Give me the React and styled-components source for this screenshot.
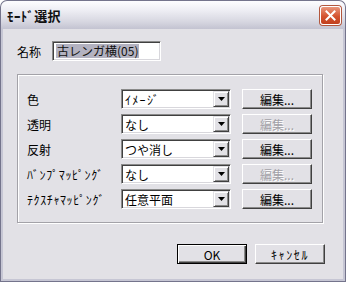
import styled, { createGlobalStyle } from "styled-components";

const GlobalStyle = createGlobalStyle`
  html, body {
    margin: 0;
    padding: 0;
    background: #ffffff;
  }
  body {
    font-family: "Noto Sans CJK JP", "Noto Sans", sans-serif;
    font-size: 12px;
    color: #000;
  }
`;

const Window = styled.div`
  width: 346px;
  height: 282px;
  display: flex;
  flex-direction: column;
`;

const TitleBar = styled.div`
  height: 29px;
  flex: none;
  box-sizing: border-box;
  display: flex;
  align-items: center;
  justify-content: space-between;
  padding: 0 4px 0 6px;
  border: 1px solid #74748c;
  border-bottom: none;
  border-radius: 7px 7px 0 0;
  background: linear-gradient(#fdfdff 0%, #ededf3 35%, #d6d6e0 75%, #c3c3d1 100%);
`;

const Title = styled.span`
  font-weight: bold;
  font-size: 13px;
  color: #111;
  letter-spacing: 0.4px;
`;

const CloseButton = styled.div`
  width: 21px;
  height: 19px;
  box-sizing: border-box;
  border: 1px solid #ffffff;
  border-radius: 3px;
  background: linear-gradient(#e9967c, #d4532f 55%, #c1401f);
  box-shadow: 0 0 0 1px #b2573e;
  display: flex;
  align-items: center;
  justify-content: center;
`;

const Client = styled.div`
  flex: 1;
  box-sizing: border-box;
  background: #e2e1e6;
  border: 1px solid #74748c;
  border-top: none;
  box-shadow: inset 2px 0 0 #c6c6d4, inset -2px 0 0 #c6c6d4, inset 0 -2px 0 #c6c6d4;
  padding: 12px 20px 0 16px;
  display: flex;
  flex-direction: column;
`;

const NameRow = styled.div`
  display: flex;
  align-items: center;
  gap: 11px;
`;

const Label = styled.span`
  font-size: 12px;
  white-space: nowrap;
  letter-spacing: ${(p) => p.spacing || 0}px;
`;

const Sunken = styled.div`
  box-sizing: border-box;
  width: ${(p) => p.w}px;
  height: 20px;
  background: #ffffff;
  border: 1px solid;
  border-color: #8a8a8a #ffffff #ffffff #8a8a8a;
  box-shadow: inset 1px 1px 0 #404040, inset -1px -1px 0 #d8d7dc;
  display: flex;
  align-items: center;
  padding: 0 2px 0 3px;
`;

const Selected = styled.span`
  background: #b3b2c0;
  color: #111;
  line-height: 14px;
  padding: 0 1px;
`;

const Group = styled.div`
  margin-top: 13px;
  width: 306px;
  height: 149px;
  box-sizing: border-box;
  border: 1px solid #a3a2a8;
  box-shadow: 1px 1px 0 #ffffff, inset 1px 1px 0 #ffffff;
  padding: 14px 0 0 9px;
  display: grid;
  grid-template-columns: 94px 110px 70px;
  grid-auto-rows: 20px;
  column-gap: 0;
  row-gap: 5px;
  align-items: center;
`;

const ComboText = styled.span`
  flex: 1;
  white-space: nowrap;
  letter-spacing: ${(p) => p.spacing || 0}px;
`;

const ArrowButton = styled.div`
  width: 16px;
  height: 16px;
  box-sizing: border-box;
  margin-right: -1px;
  background: #e2e1e6;
  border: 1px solid;
  border-color: #e2e1e6 #404040 #404040 #e2e1e6;
  box-shadow: inset 1px 1px 0 #ffffff, inset -1px -1px 0 #8a8a8a;
  display: flex;
  align-items: center;
  justify-content: center;
`;

const Button = styled.div`
  box-sizing: border-box;
  width: 70px;
  height: 20px;
  margin-left: ${(p) => p.offset || 0}px;
  background: #e2e1e6;
  border: 1px solid;
  border-color: ${(p) =>
    p.isDefault ? "#000" : "#ffffff #404040 #404040 #ffffff"};
  box-shadow: ${(p) =>
    p.isDefault
      ? "inset 1px 1px 0 #ffffff, inset -1px -1px 0 #404040, inset -2px -2px 0 #8a8a8a"
      : "inset -1px -1px 0 #8a8a8a"};
  display: flex;
  align-items: center;
  justify-content: center;
  font-size: 12px;
  color: ${(p) => (p.disabled ? "#a3a2a8" : "#000")};
  text-shadow: ${(p) => (p.disabled ? "1px 1px 0 #ffffff" : "none")};
  letter-spacing: ${(p) => p.spacing || 0}px;
`;

const Footer = styled.div`
  margin-top: 21px;
  display: flex;
  justify-content: flex-end;
  gap: 8px;
`;

const rows = [
  { label: "色", value: "ｲﾒｰｼﾞ", edit: true },
  { label: "透明", value: "なし", edit: false },
  { label: "反射", value: "つや消し", edit: true },
  { label: "ﾊﾞﾝﾌﾟﾏｯﾋﾟﾝｸﾞ", value: "なし", edit: false },
  { label: "ﾃｸｽﾁｬﾏｯﾋﾟﾝｸﾞ", value: "任意平面", edit: true },
];

// half-width katakana render narrower in Noto than in the original UI font
const isHalfWidth = (s) => /[\uff61-\uff9f]/.test(s);

function Arrow() {
  return (
    <svg width="7" height="4" viewBox="0 0 7 4">
      <path d="M0 0H7L3.5 4Z" fill="#000" />
    </svg>
  );
}

function CloseIcon() {
  return (
    <svg width="11" height="11" viewBox="0 0 11 11">
      <path d="M1.5 1.5L9.5 9.5M9.5 1.5L1.5 9.5" stroke="#fff" strokeWidth="2" strokeLinecap="square" />
    </svg>
  );
}

export default function App() {
  return (
    <>
      <GlobalStyle />
      <Window>
        <TitleBar>
          <Title>ﾓｰﾄﾞ選択</Title>
          <CloseButton>
            <CloseIcon />
          </CloseButton>
        </TitleBar>
        <Client>
          <NameRow>
            <Label>名称</Label>
            <Sunken w={109}>
              <Selected>古レンガ横(05)</Selected>
            </Sunken>
          </NameRow>
          <Group>
            {rows.map((row) => (
              <>
                <Label key={row.label + "l"} spacing={isHalfWidth(row.label) ? 0.6 : 0}>
                  {row.label}
                </Label>
                <Sunken key={row.label + "c"} w={110}>
                  <ComboText spacing={isHalfWidth(row.value) ? 1.3 : 0}>{row.value}</ComboText>
                  <ArrowButton>
                    <Arrow />
                  </ArrowButton>
                </Sunken>
                <Button key={row.label + "b"} offset={11} disabled={!row.edit}>
                  編集...
                </Button>
              </>
            ))}
          </Group>
          <Footer>
            <Button isDefault>OK</Button>
            <Button spacing={1.6}>ｷｬﾝｾﾙ</Button>
          </Footer>
        </Client>
      </Window>
    </>
  );
}
